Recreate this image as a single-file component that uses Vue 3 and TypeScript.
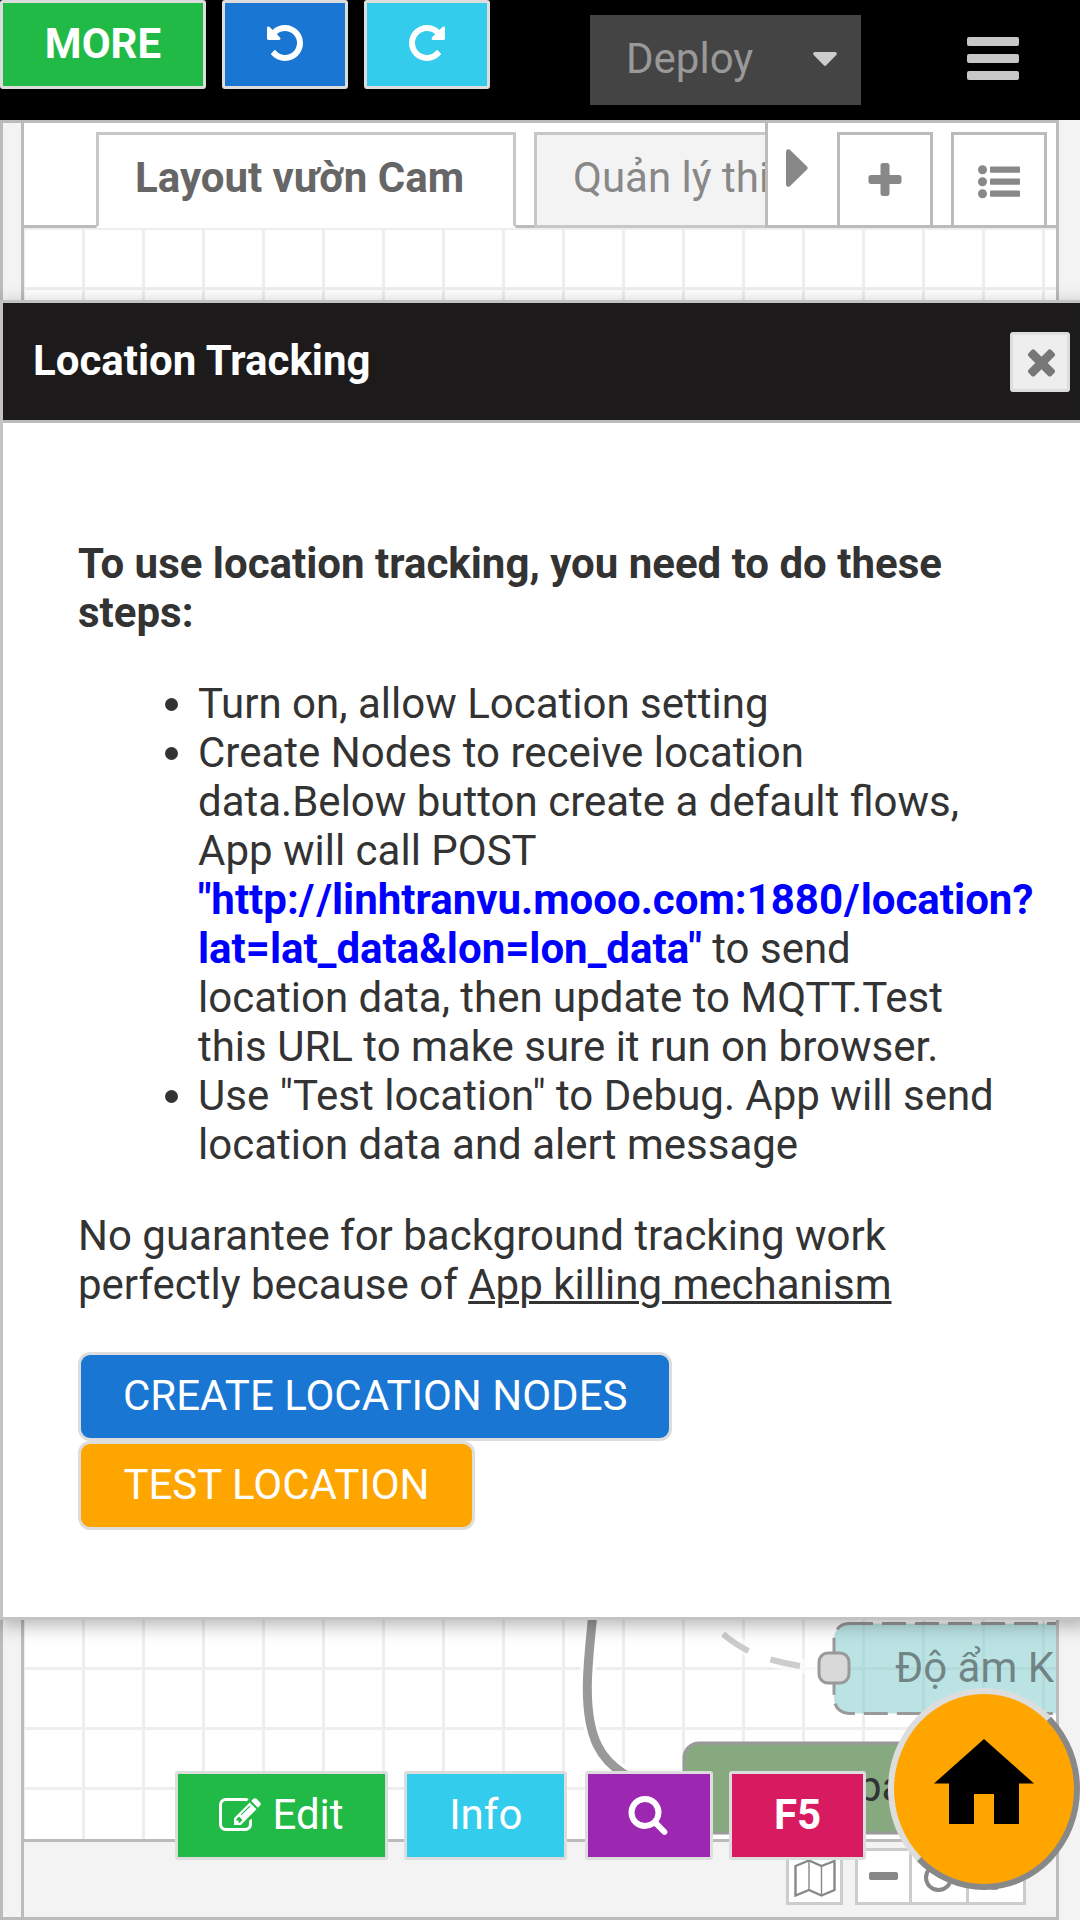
<script setup lang="ts">
const gridX: number[] = Array.from({ length: 18 }, (_, i) => 23.5 + 60 * i)
const gridY: number[] = Array.from({ length: 27 }, (_, i) => 228.5 + 60 * i)

const undoPath =
  'M1664 896q0 156-61 298t-164 245-245 164-298 61q-172 0-327-72.5t-264-204.5q-7-10-6.5-22.5t8.5-20.5l137-138q10-9 25-9 16 2 23 12 73 95 179 147t225 52q104 0 198.5-40.5t163.5-109.5 109.5-163.5 40.5-198.5-40.5-198.5-109.5-163.5-163.5-109.5-198.5-40.5q-98 0-188 35.5t-160 101.5l137 138q31 30 14 69-17 40-59 40h-448q-26 0-45-19t-19-45v-448q0-42 40-59 39-17 69 14l130 129q107-101 244.5-156.5t284.5-55.5q156 0 298 61t245 164 164 245 61 298z'
const editPath =
  'M888 1184l116-116-152-152-116 116v56h96v96h56zm440-720q-16-16-33 1l-350 350q-17 17-1 33t33-1l350-350q17-17 1-33zm80 594v190q0 119-84.5 203.5t-203.5 84.5h-832q-119 0-203.5-84.5t-84.5-203.5v-832q0-119 84.5-203.5t203.5-84.5h832q63 0 117 25 15 7 18 23 3 17-9 29l-49 49q-14 14-32 8-23-6-45-6h-832q-66 0-113 47t-47 113v832q0 66 47 113t113 47h832q66 0 113-47t47-113v-126q0-13 9-22l64-64q15-15 35-7t20 29zm-96-738l288 288-672 672h-288v-288zm444 132l-92 92-288-288 92-92q28-28 68-28t68 28l152 152q28 28 28 68t-28 68z'
const searchPath =
  'M1216 832q0-185-131.5-316.5t-316.5-131.5-316.5 131.5-131.5 316.5 131.5 316.5 316.5 131.5 316.5-131.5 131.5-316.5zm512 832q0 52-38 90t-90 38q-54 0-90-38l-343-342q-179 124-399 124-143 0-273.5-55.5t-225-150-150-225-55.5-273.5 55.5-273.5 150-225 225-150 273.5-55.5 273.5 55.5 225 150 150 225 55.5 273.5q0 220-124 399l343 343q37 37 37 90z'
const plusPath =
  'M1600 736v192q0 40-28 68t-68 28h-416v416q0 40-28 68t-68 28h-192q-40 0-68-28t-28-68v-416h-416q-40 0-68-28t-28-68v-192q0-40 28-68t68-28h416v-416q0-40 28-68t68-28h192q40 0 68 28t28 68v416h416q40 0 68 28t28 68z'
const closePath =
  'M1490 1322q0 40-28 68l-136 136q-28 28-68 28t-68-28l-294-294-294 294q-28 28-68 28t-68-28l-136-136q-28-28-28-68t28-68l294-294-294-294q-28-28-28-68t28-68l136-136q28-28 68-28t68 28l294 294 294-294q28-28 68-28t68 28l136 136q28 28 28 68t-28 68l-294 294 294 294q28 28 28 68z'
</script>

<template>
  <div class="app">
    <header class="topbar">
      <button class="btn green more">MORE</button>
      <button class="btn blue tool">
        <svg class="fa" viewBox="0 0 1792 1792"><path :d="undoPath" /></svg>
      </button>
      <button class="btn cyan tool">
        <svg class="fa mirror" viewBox="0 0 1792 1792"><path :d="undoPath" /></svg>
      </button>
      <div class="deploy">
        <span>Deploy</span>
        <svg class="caret" width="24" height="15" viewBox="0 0 24 15">
          <path d="M1.6 0h20.8q2.4.9.9 3L13 13.6q-1 .9-2 0L.7 3Q-.8.9 1.6 0z" />
        </svg>
      </div>
      <div class="burger"><i></i><i></i><i></i></div>
    </header>

    <main class="frame">
      <aside class="palette"></aside>
      <section class="workspace">
        <nav class="tabbar">
          <div class="tabs">
            <div class="tab active">Layout vườn Cam</div>
            <div class="tab">Quản lý thiết bị</div>
          </div>
          <div class="controls">
            <svg class="next" width="22" height="38" viewBox="0 0 22 38">
              <path d="M0 2.5Q.6-.6 3.6.6L21 17.6q1.300 1.400 0 2.800L3.600 37.400Q.6 38.600 0 35.500z" />
            </svg>
            <div class="ctl">
              <svg class="fa plus" viewBox="0 0 1792 1792"><path :d="plusPath" /></svg>
            </div>
            <div class="ctl list">
              <svg width="42" height="34" viewBox="0 0 42 34">
                <circle cx="4.500" cy="4.700" r="4.500" /><circle cx="4.500" cy="16.700" r="4.500" /><circle cx="4.500" cy="28.700" r="4.500" />
                <rect x="12" y="1.500" width="30" height="6.200" rx=".8" /><rect x="12" y="13.500" width="30" height="6.200" rx=".8" /><rect x="12" y="25.500" width="30" height="6.200" rx=".8" />
              </svg>
            </div>
          </div>
        </nav>

        <svg class="canvas" width="1032" height="1611" viewBox="24 228 1032 1611">
          <g stroke="#eee" stroke-width="3">
            <line v-for="x in gridX" :key="'x' + x" :x1="x" :x2="x" y1="228" y2="1839" />
            <line v-for="y in gridY" :key="'y' + y" x1="24" x2="1056" :y1="y" :y2="y" />
          </g>
          <g fill="none">
            <path d="M593 1612C590 1645 587.300 1665 587.300 1688C587.300 1740 602 1760 624 1774C645 1786 662 1787 683 1787" stroke="#fff" stroke-width="15" />
            <path d="M593 1612C590 1645 587.300 1665 587.300 1688C587.300 1740 602 1760 624 1774C645 1786 662 1787 683 1787" stroke="#999" stroke-width="9" />
            <path d="M719 1630Q757 1664 818 1667.500" stroke="#fff" stroke-opacity=".6" stroke-width="15" />
            <path d="M723 1634Q734 1643.500 748.500 1651M770.500 1659.500Q785 1663.500 800 1666" stroke="#ccc" stroke-width="6" />
          </g>
          <g>
            <rect x="834" y="1623.500" width="260" height="90" rx="15" fill="#77c8ca" fill-opacity=".5" stroke="#999" stroke-width="3" stroke-dasharray="24 9" />
            <text x="895" y="1682" fill="#333" fill-opacity=".55">Độ ẩm K</text>
            <rect x="819" y="1653" width="30" height="30" rx="9" fill="#d9d9d9" stroke="#999" stroke-width="3" />
          </g>
          <g>
            <rect x="684" y="1743" width="420" height="90" rx="15" fill="#87a980" stroke="#999" stroke-width="3" />
            <text x="858" y="1801" fill="#333">pa</text>
          </g>
        </svg>

        <footer class="statusbar">
          <div class="foot-btn">
            <svg width="42" height="38" viewBox="0 0 42 38" fill="none" stroke="#888">
              <path d="M1.500 7L15 1.500L27.500 7L40.500 2V31L27.500 36.500L15 31L1.500 36.500z" stroke-width="2.400" />
              <path d="M15 2V31M27.500 7V36" stroke-width="1.400" />
            </svg>
          </div>
          <div class="foot-group">
            <div class="cell first"><span class="minus"></span></div>
            <div class="cell"><span class="ring"></span></div>
            <div class="cell"><svg class="zoom-in" viewBox="0 0 1792 1792"><path :d="plusPath" /></svg></div>
          </div>
        </footer>
      </section>
    </main>

    <section class="dialog">
      <div class="dialog-head">
        <h1>Location Tracking</h1>
        <button class="close">
          <svg viewBox="0 0 1792 1792"><path :d="closePath" /></svg>
        </button>
      </div>
      <div class="dialog-body">
        <p><b>To use location tracking, you need to do these steps:</b></p>
        <ul>
          <li>Turn on, allow Location setting</li>
          <li>
            Create Nodes to receive location data.Below button create a default flows, App will call POST
            <b class="url">"http:<span class="scheme">/</span>/linhtranvu.mooo.com:1880<span class="slash">/</span>location?lat=lat_data&amp;lon=lon_data"</b>
            to send location data, then update to MQTT.Test this URL to make sure it run on browser.
          </li>
          <li>Use "Test location" to Debug. App will send location data and alert message</li>
        </ul>
        <p>No guarantee for background tracking work perfectly because of <u>App killing mechanism</u></p>
        <div class="actions">
          <button class="btn round blue">CREATE LOCATION NODES</button>
          <button class="btn round orange">TEST LOCATION</button>
        </div>
      </div>
    </section>

    <div class="quickbar">
      <button class="btn green edit">
        <svg class="fa" viewBox="0 0 1792 1792"><path :d="editPath" /></svg>
        <span>Edit</span>
      </button>
      <button class="btn cyan info">Info</button>
      <button class="btn purple find">
        <svg class="fa" viewBox="0 0 1792 1792"><path :d="searchPath" /></svg>
      </button>
      <button class="btn pink f5">F5</button>
    </div>

    <button class="home">
      <svg width="100" height="85" viewBox="0 0 100 85">
        <path d="M50 0L100 44.500H85V85H60V55H40V85H15V44.500H0z" />
      </svg>
    </button>
  </div>
</template>

<style>
body {
  margin: 0;
  background: #f3f3f3;
}
</style>

<style scoped>
.app {
  position: relative;
  width: 1080px;
  height: 1920px;
  overflow: hidden;
  background: #f3f3f3;
  color: #333;
  font: 42px/49px Roboto, 'Noto Sans', sans-serif;
}
.app * {
  box-sizing: border-box;
}
button {
  font: inherit;
  margin: 0;
  padding: 0;
}
svg {
  display: block;
}

.topbar {
  display: flex;
  align-items: flex-start;
  height: 120px;
  background: #000;
}
.btn {
  display: flex;
  justify-content: center;
  align-items: flex-start;
  height: 89px;
  border: 3px solid #ddd;
  border-radius: 3px;
  color: #fff;
  line-height: 81px;
  white-space: nowrap;
}
.green { background: #22ba46; }
.blue { background: #1976d2; }
.cyan { background: #33ccec; }
.purple { background: #9c27b0; }
.pink { background: #d81b60; }
.orange { background: #ffa500; }
.fa {
  width: 42px;
  height: 42px;
  fill: #fff;
}
.more {
  width: 206px;
  font-weight: bold;
}
.tool {
  width: 126px;
  margin-left: 16px;
}
.tool .fa {
  margin-top: 19px;
}
.mirror {
  transform: scaleX(-1);
}
.deploy {
  display: flex;
  justify-content: space-between;
  width: 271px;
  height: 90px;
  margin: 15px 0 0 100px;
  padding: 0 24px 0 36px;
  background: #444;
  color: #999;
  line-height: 87px;
}
.caret {
  margin-top: 37px;
  fill: #ccc;
}
.burger {
  display: flex;
  flex-direction: column;
  gap: 8px;
  margin: 37px 0 0 106px;
}
.burger i {
  width: 52px;
  height: 9px;
  border-radius: 2px;
  background: #c7c7c7;
}

.frame {
  display: flex;
  width: 1059px;
  height: 1800px;
  border: 3px solid #bbb;
}
.palette {
  width: 18px;
  background: #f3f3f3;
}
.workspace {
  width: 1035px;
  border-left: 3px solid #bbb;
}
.tabbar {
  display: flex;
  height: 105px;
  background: #fff;
  box-shadow: inset 0 -3px #bbb;
}
.tabs {
  display: flex;
  gap: 18px;
  width: 741px;
  padding: 9px 0 0 72px;
  overflow: hidden;
}
.tab {
  flex: none;
  height: 96px;
  padding: 0 37px 0 36px;
  border: 3px solid #c7c7c7;
  background: #f3f3f3;
  color: #888;
  line-height: 85px;
  white-space: nowrap;
}
.tab.active {
  width: 420px;
  padding: 0 0 0 36px;
  border-bottom-color: #fff;
  background: #fff;
  color: #666;
  font-weight: bold;
}
.controls {
  display: flex;
  width: 291px;
  border-left: 3px solid #bbb;
  border-bottom: 3px solid #bbb;
  background: #fff;
}
.next {
  margin: 26px 0 0 18px;
  fill: #888;
}
.ctl {
  width: 96px;
  height: 93px;
  margin: 9px 0 0 29px;
  border: 3px solid #bbb;
  border-bottom: 0;
}
.ctl svg {
  fill: #888;
}
.ctl .plus {
  margin: 25px 0 0 24px;
}
.list {
  margin-left: 18px;
}
.list svg {
  margin: 30px 0 0 24px;
}
.canvas {
  background: #fff;
}
.statusbar {
  display: flex;
  height: 78px;
  padding: 6px 0 0 762px;
  border-top: 3px solid #bbb;
  background: #f3f3f3;
}
.foot-btn,
.foot-group {
  display: flex;
  height: 57px;
  border: 3px solid #ccc;
  background: #fff;
}
.foot-btn {
  width: 57px;
  padding: 8px 0 0 5px;
}
.foot-group {
  width: 171px;
  margin-left: 12px;
}
.cell {
  width: 57px;
}
.cell.first {
  width: 51px;
}
.cell + .cell {
  border-left: 3px solid #ccc;
}
.minus {
  display: block;
  width: 29px;
  height: 8px;
  margin: 21px 0 0 11px;
  border-radius: 2px;
  background: #888;
}
.ring {
  display: block;
  width: 29px;
  height: 29px;
  margin: 12px 0 0 12px;
  border: 4px solid #888;
  border-radius: 50%;
}
.zoom-in {
  width: 37px;
  height: 37px;
  margin: 7px 0 0 7px;
  fill: #888;
}

.dialog {
  position: absolute;
  top: 300px;
  left: 0;
  width: 1090px;
  height: 1320px;
  border: 3px solid #c3c3c3;
  background: #fff;
  box-shadow: 0 5px 18px rgba(0, 0, 0, 0.3);
}
.dialog-head {
  display: flex;
  height: 120px;
  padding-left: 30px;
  border-bottom: 3px solid #bbb;
  background: #1c1a1b;
}
.dialog-head h1 {
  width: 977px;
  margin: 0;
  color: #fff;
  font-size: 42px;
  font-weight: bold;
  line-height: 115px;
}
.close {
  width: 60px;
  height: 60px;
  margin-top: 29px;
  border: 3px solid #ddd;
  border-radius: 3px;
  background: #eee;
}
.close svg {
  width: 41px;
  height: 41px;
  margin: -1px 0 0 8px;
  fill: #777;
}
.dialog-body {
  width: 998px;
  padding: 116px 0 0 75px;
}
.dialog-body p {
  margin: 0;
}
.dialog-body ul {
  margin: 42px 0;
  padding-left: 120px;
}
.url {
  color: #00f;
}
.scheme {
  letter-spacing: 2px;
}
.slash {
  margin-left: 1px;
  letter-spacing: 1px;
}
u {
  text-decoration-thickness: 3px;
}
.actions {
  margin-top: 43px;
}
.round {
  padding: 0 42px;
  border-radius: 12px;
}
.orange {
  width: 397px;
}

.quickbar {
  position: absolute;
  top: 1771px;
  left: 175px;
  display: flex;
}
.edit { width: 213px; }
.edit .fa { margin: 21px 11px 0 0; }
.info { width: 162.500px; margin-left: 16px; padding-left: 1px; }
.find { width: 128px; margin-left: 18px; padding-right: 2px; }
.find .fa { margin-top: 19px; }
.f5 { width: 137px; margin-left: 16.500px; font-weight: bold; }

.home {
  position: absolute;
  top: 1688px;
  left: 888px;
  width: 192px;
  height: 202px;
  border: 6px solid;
  border-color: #ddd #888 #888 #ddd;
  border-radius: 50%;
  background: #ffa500;
}
.home svg {
  margin: -15px 0 0 40px;
}
</style>
